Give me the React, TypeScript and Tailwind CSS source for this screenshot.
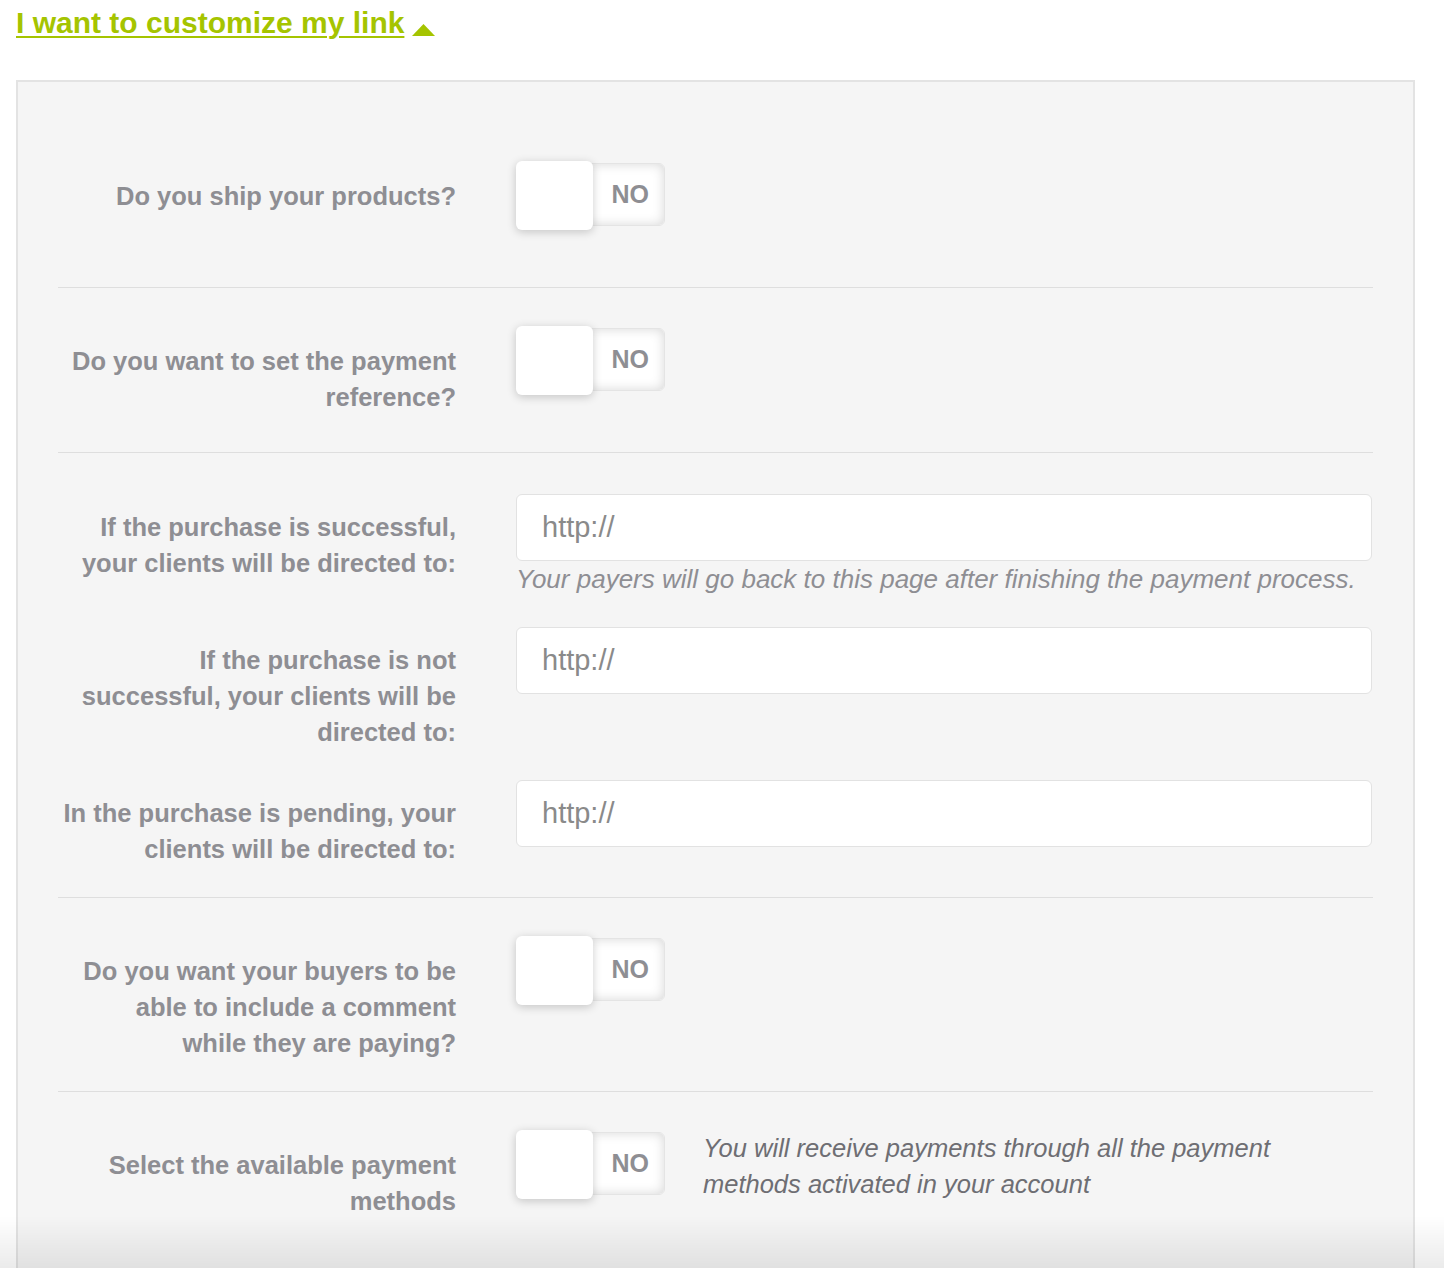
import { ReactNode } from 'react'

const font = { fontFamily: '"Liberation Sans", Arial, sans-serif' }

const Toggle = () => {
  return (
    <div className="relative h-[69px] w-[149px] shrink-0">
      <div className="absolute left-0 right-0 top-[2px] flex h-[63px] items-center justify-end rounded-[6px] border border-[#e4e4e4] bg-white pr-[15px] shadow-[inset_0_0_12px_rgba(0,0,0,0.16)]">
        <span className="text-[25px] font-bold text-[#8e8e93]">NO</span>
      </div>
      <div className="absolute left-0 top-0 h-[69px] w-[77px] rounded-[6px] bg-white shadow-[0_2px_10px_rgba(0,0,0,0.2)]" />
    </div>
  )
}

const Label = ({ children, pt }: { children: ReactNode; pt: string }) => {
  return (
    <div
      className={`w-[398px] shrink-0 text-right text-[25.5px] font-bold leading-[36px] text-[#8e8e93] ${pt}`}
    >
      {children}
    </div>
  )
}

const UrlInput = () => {
  return (
    <input
      type="text"
      placeholder="http://"
      className="h-[67px] w-[856px] rounded-[6px] border border-[#e2e2e2] bg-white px-[25px] text-[29px] text-[#555] outline-none placeholder:text-[#8a8a8a]"
    />
  )
}

const ToggleRow = ({ label, last }: { label: ReactNode; last?: boolean }) => {
  return (
    <div
      className={`flex pb-[30px] pt-[38px] ${last ? '' : 'border-b border-[#dedede]'}`}
    >
      <Label pt="pt-[17px]">{label}</Label>
      <div className="ml-[60px] mb-[27px]">
        <Toggle />
      </div>
    </div>
  )
}

const App = () => {
  return (
    <div className="min-h-screen bg-white px-[16px]" style={font}>
      <div className="flex h-[80px] items-start pt-[3px]">
        <a
          href="#"
          className="text-[30px] font-bold leading-[40px] text-[#a5c400] underline decoration-[2px] underline-offset-[3px]"
        >
          I want to customize my link
        </a>
        <svg className="ml-[8px] mt-[21px]" width="23" height="12" viewBox="0 0 23 12">
          <path d="M11.5 0 L23 12 L0 12 Z" fill="#a5c400" />
        </svg>
      </div>

      <div className="w-[1399px] border-2 border-[#e3e3e3] bg-[#f5f5f5] px-[40px] pt-[41px]">
        <ToggleRow label="Do you ship your products?" />
        <ToggleRow
          label={
            <>
              Do you want to set the payment
              <br />
              reference?
            </>
          }
        />

        <div className="border-b border-[#dedede] pt-[41px]">
          <div className="mb-[30px] flex">
            <Label pt="pt-[15px]">
              If the purchase is successful,
              <br />
              your clients will be directed to:
            </Label>
            <div className="ml-[60px]">
              <UrlInput />
              <p className="whitespace-nowrap text-[26px] italic leading-[36px] text-[#8e8e93]">
                Your payers will go back to this page after finishing the
                payment process.
              </p>
            </div>
          </div>
          <div className="mb-[30px] flex">
            <Label pt="pt-[15px]">
              If the purchase is not
              <br />
              successful, your clients will be
              <br />
              directed to:
            </Label>
            <div className="ml-[60px]">
              <UrlInput />
            </div>
          </div>
          <div className="mb-[30px] flex">
            <Label pt="pt-[15px]">
              In the purchase is pending, your
              <br />
              clients will be directed to:
            </Label>
            <div className="ml-[60px]">
              <UrlInput />
            </div>
          </div>
        </div>

        <ToggleRow
          label={
            <>
              Do you want your buyers to be
              <br />
              able to include a comment
              <br />
              while they are paying?
            </>
          }
        />

        <div className="flex pb-[70px] pt-[38px]">
          <Label pt="pt-[17px]">
            Select the available payment
            <br />
            methods
          </Label>
          <div className="ml-[60px] flex items-start gap-[38px]">
            <Toggle />
            <p className="w-[620px] text-[25.5px] italic leading-[36px] text-[#6e6e73]">
              You will receive payments through all the payment methods
              activated in your account
            </p>
          </div>
        </div>
      </div>

      <div className="pointer-events-none fixed inset-x-0 bottom-0 h-[52px] bg-gradient-to-b from-transparent to-black/[0.08]" />
    </div>
  )
}

export default App
